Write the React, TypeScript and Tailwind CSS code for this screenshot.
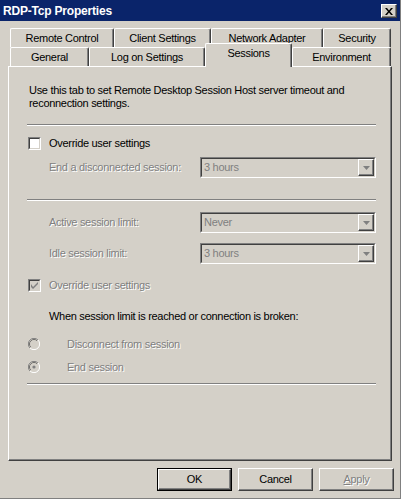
import React from 'react';

const emboss = '[text-shadow:1px_1px_0_#ffffff]';

interface TabProps {
  label: string;
  width: number;
  selected?: boolean;
}

const tabWidths: Record<string, string> = {
  '104': 'w-[104px]',
  '97': 'w-[97px]',
  '112': 'w-[112px]',
  '68': 'w-[68px]',
  '79': 'w-[79px]',
  '116': 'w-[116px]',
  '87': 'w-[87px]',
  '99': 'w-[99px]',
};

const Tab: React.FC<TabProps> = ({ label, width, selected }) => (
  <div
    className={`${tabWidths[String(width)]} ${
      selected
        ? 'relative z-10 -mt-[4px] h-[24px] pb-[5px] -mb-[1px]'
        : 'h-[19px]'
    } flex items-center justify-center rounded-tl-[2px] rounded-tr-[2px] border-l border-t border-white border-r border-r-[#404040] bg-[#d4d0c8] shadow-[inset_-1px_0_0_#808080] text-[11px] leading-[13px] text-black`}
  >
    {label}
  </div>
);

const Separator: React.FC = () => (
  <div className="w-full border-t border-[#808080] border-b border-b-white" />
);

const Combo: React.FC<{ value: string }> = ({ value }) => (
  <div className="w-[176px] h-[21px] flex border border-[#808080] border-r-white border-b-white">
    <div className="flex-1 flex border border-[#404040] border-r-[#d4d0c8] border-b-[#d4d0c8] bg-[#d4d0c8]">
      <div className="flex-1 pl-[2px] text-[11px] leading-[17px] text-[#808080]">{value}</div>
      <div className="w-[16px] flex items-center justify-center border border-white border-r-[#404040] border-b-[#404040] shadow-[inset_-1px_-1px_0_#808080]">
        <svg width="7" height="4" viewBox="0 0 7 4">
          <path d="M0 0h7L3.5 4z" fill="#808080" />
        </svg>
      </div>
    </div>
  </div>
);

const CheckBox: React.FC<{ checked?: boolean; disabled?: boolean }> = ({ checked, disabled }) => (
  <div className="w-[13px] h-[13px] flex border border-[#808080] border-r-white border-b-white">
    <div
      className={`flex-1 flex items-center justify-center border border-[#404040] border-r-[#d4d0c8] border-b-[#d4d0c8] ${
        disabled ? 'bg-[#d4d0c8]' : 'bg-white'
      }`}
    >
      {checked && (
        <svg width="7" height="7" viewBox="0 0 7 7">
          <path d="M0 2v3l2 2 5-5V0L2 5z" fill="#808080" />
        </svg>
      )}
    </div>
  </div>
);

const Radio: React.FC<{ checked?: boolean }> = ({ checked }) => (
  <svg width="12" height="12" viewBox="0 0 12 12">
    <path d="M10 2A5.5 5.5 0 0 0 2 10" stroke="#808080" fill="none" />
    <path d="M9 3A4 4 0 0 0 3 9" stroke="#404040" fill="none" />
    <path d="M2 10A5.5 5.5 0 0 0 10 2" stroke="#ffffff" fill="none" />
    <circle cx="6" cy="6" r="4" fill="#d4d0c8" />
    {checked && <circle cx="6" cy="6" r="1.6" fill="#808080" />}
  </svg>
);

const Button: React.FC<{ label: React.ReactNode; isDefault?: boolean; disabled?: boolean }> = ({
  label,
  isDefault,
  disabled,
}) => (
  <div
    className={`w-[75px] h-[23px] flex ${isDefault ? 'border border-black' : ''}`}
  >
    <div
      className={`flex-1 flex items-center justify-center border border-white border-r-[#404040] border-b-[#404040] shadow-[inset_-1px_-1px_0_#808080] text-[11px] ${
        disabled ? `text-[#808080] ${emboss}` : 'text-black'
      }`}
    >
      {label}
    </div>
  </div>
);

export default function App() {
  return (
    <div className="w-[401px] h-[499px] bg-[#d4d0c8] border-r border-b border-[#808080] flex flex-col font-['Liberation_Sans',Arial,sans-serif] tracking-[-0.3px] select-none">
      {/* title bar */}
      <div className="h-[21px] bg-[#0a246a] flex items-center justify-between pl-[3px] pr-[2px]">
        <span className="text-white font-bold text-[12px] tracking-[-0.2px]">RDP-Tcp Properties</span>
        <div className="w-[16px] h-[14px] mt-[1px] mr-[1px] flex items-center justify-center bg-[#d4d0c8] border border-white border-r-[#404040] border-b-[#404040] shadow-[inset_-1px_-1px_0_#808080]">
          <svg width="8" height="7" viewBox="0 0 8 7">
            <path d="M0 0h2l2 2.5L6 0h2L5 3.5 8 7H6L4 4.5 2 7H0l3-3.5z" fill="#000" />
          </svg>
        </div>
      </div>

      {/* tabs */}
      <div className="mt-[7px] pl-[10px] flex">
        <Tab label="Remote Control" width={104} />
        <Tab label="Client Settings" width={97} />
        <Tab label="Network Adapter" width={112} />
        <Tab label="Security" width={68} />
      </div>
      <div className="pl-[10px] flex items-start">
        <Tab label="General" width={79} />
        <Tab label="Log on Settings" width={116} />
        <Tab label="Sessions" width={87} selected />
        <Tab label="Environment" width={99} />
      </div>

      {/* page */}
      <div className="ml-[8px] w-[384px] h-[395px] border-l border-t border-white border-r border-b border-r-[#404040] border-b-[#404040] shadow-[inset_-1px_-1px_0_#808080]">
        <div className="ml-[18px] w-[349px] pt-[17px] flex flex-col text-[11px] leading-[13px] text-black">
          <p className="pl-[2px]">
            Use this tab to set Remote Desktop Session Host server timeout and reconnection settings.
          </p>
          <div className="mt-[14px]">
            <Separator />
          </div>

          <div className="mt-[11px] flex items-center pl-[1px] h-[13px]">
            <CheckBox />
            <span className="ml-[8px]">Override user settings</span>
          </div>
          <div className="mt-[7px] flex items-center h-[21px]">
            <span className={`w-[173px] pl-[22px] text-[#808080] ${emboss}`}>End a disconnected session:</span>
            <Combo value="3 hours" />
          </div>

          <div className="mt-[21px]">
            <Separator />
          </div>

          <div className="mt-[11px] flex items-center h-[21px]">
            <span className={`w-[173px] pl-[22px] text-[#808080] ${emboss}`}>Active session limit:</span>
            <Combo value="Never" />
          </div>
          <div className="mt-[10px] flex items-center h-[21px]">
            <span className={`w-[173px] pl-[22px] text-[#808080] ${emboss}`}>Idle session limit:</span>
            <Combo value="3 hours" />
          </div>

          <div className="mt-[15px] flex items-center pl-[1px] h-[13px]">
            <CheckBox checked disabled />
            <span className={`ml-[8px] text-[#808080] ${emboss}`}>Override user settings</span>
          </div>

          <p className="mt-[18px] pl-[22px]">When session limit is reached or connection is broken:</p>

          <div className="mt-[15px] flex items-center pl-[1px] h-[12px]">
            <Radio />
            <span className={`ml-[27px] text-[#808080] ${emboss}`}>Disconnect from session</span>
          </div>
          <div className="mt-[11px] flex items-center pl-[1px] h-[12px]">
            <Radio checked />
            <span className={`ml-[27px] text-[#808080] ${emboss}`}>End session</span>
          </div>

          <div className="mt-[10px]">
            <Separator />
          </div>
        </div>
      </div>

      {/* buttons */}
      <div className="mt-[7px] pl-[157px] flex gap-[6px]">
        <Button label="OK" isDefault />
        <Button label="Cancel" />
        <Button
          label={
            <span>
              <span className="underline">A</span>pply
            </span>
          }
          disabled
        />
      </div>
    </div>
  );
}
